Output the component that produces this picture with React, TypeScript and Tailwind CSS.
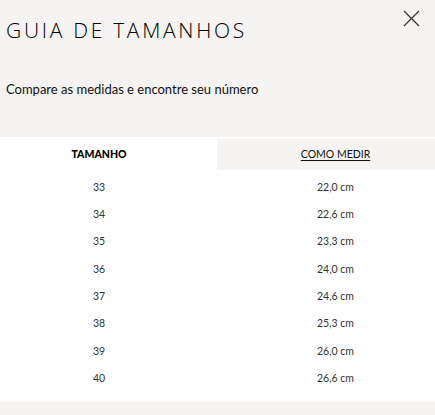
import { type FC } from "react";

const sizes: Array<[string, string]> = [
  ["33", "22,0 cm"],
  ["34", "22,6 cm"],
  ["35", "23,3 cm"],
  ["36", "24,0 cm"],
  ["37", "24,6 cm"],
  ["38", "25,3 cm"],
  ["39", "26,0 cm"],
  ["40", "26,6 cm"],
];

const CloseIcon: FC = () => (
  <svg width="17" height="17" viewBox="0 0 17 17" fill="none">
    <path d="M1 1L16 16M16 1L1 16" stroke="#333" strokeWidth="1.2" />
  </svg>
);

export default function App() {
  return (
    <div className="w-[435px] h-[415px] bg-[#f5f4f2] font-['Lato',sans-serif] text-[#222] overflow-hidden">
      <div className="flex items-start justify-between pl-[6px] pr-[15px]">
        <h1 className="mt-[18px] text-[21px] leading-[24px] tracking-[2.7px] font-['Open_Sans',sans-serif] font-light text-[#000]">
          GUIA DE TAMANHOS
        </h1>
        <button className="mt-[10px]">
          <CloseIcon />
        </button>
      </div>
      <p className="pl-[6px] mt-[38px] text-[13px] leading-[18px] text-[#111]">
        Compare as medidas e encontre seu número
      </p>
      <div className="mt-[39px] bg-white">
        <div className="grid grid-cols-[217px_1fr] h-[33px] text-[10.5px] pt-[2px]">
          <div className="flex items-center justify-center pr-[19px] bg-white font-black text-black">
            TAMANHO
          </div>
          <div className="flex items-center justify-center pl-[19px] bg-[#f5f4f2] underline underline-offset-2 text-[#111]">
            COMO MEDIR
          </div>
        </div>
        <div className="pt-[4px] pb-[10px] text-[10.5px] text-[#333]">
          {sizes.map(([size, cm]) => (
            <div key={size} className="grid grid-cols-[217px_1fr] h-[27.3px] items-center">
              <div className="text-center pr-[19px]">{size}</div>
              <div className="text-center pl-[19px]">{cm}</div>
            </div>
          ))}
        </div>
      </div>
    </div>
  );
}
